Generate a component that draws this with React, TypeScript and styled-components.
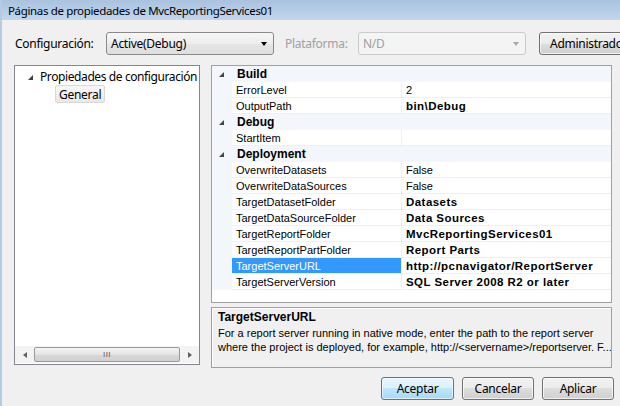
import React from "react";
import styled, { createGlobalStyle } from "styled-components";

const Global = createGlobalStyle`
  html, body { margin: 0; padding: 0; background: #f0f0f0; }
  #root { width: 620px; height: 406px; }
`;

const UI = `"Noto Sans", "Open Sans", sans-serif`;
const GRIDFONT = `"Liberation Sans", Arial, sans-serif`;

const Win = styled.div`
  width: 620px;
  height: 406px;
  overflow: hidden;
  display: flex;
  flex-direction: column;
  background: #f0f0f0;
  border-left: 2px solid #b4cbe4;
  box-sizing: border-box;
  font-family: ${UI};
  font-size: 12px;
  letter-spacing: -0.28px;
  color: #000;
`;

const TitleBar = styled.div`
  height: 20px;
  flex: none;
  display: flex;
  align-items: center;
  padding-left: 6px;
  background: linear-gradient(#a9c2de, #c2d7ed);
  font-size: 11.5px;
  letter-spacing: -0.35px;
  color: #000;
  white-space: nowrap;
`;

const Body = styled.div`
  flex: 1;
  display: flex;
  flex-direction: column;
  padding: 12px 0 0 12px;
`;

const ConfigRow = styled.div`
  display: flex;
  align-items: center;
  height: 23px;
  white-space: nowrap;
`;

const Label = styled.span<{ $w: number; $disabled?: boolean }>`
  width: ${(p) => p.$w}px;
  flex: none;
  padding-left: 1px;
  color: ${(p) => (p.$disabled ? "#a0a0a0" : "#000")};
`;

const Combo = styled.div<{ $disabled?: boolean }>`
  width: 168px;
  height: 23px;
  flex: none;
  box-sizing: border-box;
  display: flex;
  align-items: center;
  justify-content: space-between;
  padding: 0 6px 0 4px;
  border-radius: 3px;
  border: 1px solid ${(p) => (p.$disabled ? "#c9cccf" : "#8a8a8a")};
  background: ${(p) =>
    p.$disabled ? "#f4f4f4" : "linear-gradient(#f6f6f6, #eeeeee 50%, #e6e6e6 50%, #dedede)"};
  color: ${(p) => (p.$disabled ? "#a0a0a0" : "#000")};
`;

const Arrow = styled.span<{ $disabled?: boolean }>`
  width: 0;
  height: 0;
  border-left: 3.5px solid transparent;
  border-right: 3.5px solid transparent;
  border-top: 4px solid ${(p) => (p.$disabled ? "#a9a9a9" : "#000")};
`;

const Button = styled.div<{ $default?: boolean; $w: number }>`
  width: ${(p) => p.$w}px;
  height: 23px;
  flex: none;
  box-sizing: border-box;
  display: flex;
  align-items: center;
  justify-content: center;
  border-radius: 3px;
  border: 1px solid ${(p) => (p.$default ? "#3c7fb1" : "#707070")};
  background: ${(p) =>
    p.$default
      ? "linear-gradient(#eaf6fd, #d9f0fc 50%, #bee6fd 50%, #a7d9f5)"
      : "linear-gradient(#f2f2f2, #ebebeb 50%, #dddddd 50%, #cfcfcf)"};
  box-shadow: inset 0 0 0 1px ${(p) => (p.$default ? "rgba(255,255,255,0.6)" : "rgba(255,255,255,0.7)")};
  white-space: nowrap;
`;

const AdminButton = styled(Button)`
  justify-content: flex-start;
  padding-left: 10px;
`;

const Main = styled.div`
  display: flex;
  gap: 11px;
  margin-top: 10px;
`;

const TreePanel = styled.div`
  width: 186px;
  height: 300px;
  box-sizing: border-box;
  border: 1px solid #828790;
  background: #fff;
  display: flex;
  flex-direction: column;
`;

const TreeBody = styled.div`
  flex: 1;
  display: flex;
  flex-direction: column;
  padding-top: 1px;
`;

const TreeRow = styled.div<{ $indent: number }>`
  display: flex;
  align-items: center;
  height: 18px;
  padding-left: ${(p) => p.$indent}px;
  white-space: nowrap;
  letter-spacing: -0.4px;
`;

const Expander = styled.span`
  width: 0;
  height: 0;
  flex: none;
  border-left: 5px solid transparent;
  border-bottom: 5px solid #404040;
  margin-right: 7px;
  margin-top: 2px;
`;

const SelectedItem = styled.span`
  display: inline-flex;
  align-items: center;
  height: 16px;
  padding: 0 3px 0 3px;
  border: 1px solid #d9d9d9;
  border-radius: 2px;
  background: linear-gradient(#f7f7f7, #e8e8e8);
  letter-spacing: -0.28px;
`;

const HScroll = styled.div`
  height: 17px;
  flex: none;
  display: flex;
  align-items: center;
  background: #f3f3f3;
  margin-bottom: 1px;
`;

const ScrollBtn = styled.div`
  width: 19px;
  height: 17px;
  flex: none;
  display: flex;
  align-items: center;
  justify-content: center;
`;

const TriLeft = styled.span`
  width: 0;
  height: 0;
  border-top: 3.5px solid transparent;
  border-bottom: 3.5px solid transparent;
  border-right: 4px solid #606060;
`;

const TriRight = styled.span`
  width: 0;
  height: 0;
  border-top: 3.5px solid transparent;
  border-bottom: 3.5px solid transparent;
  border-left: 4px solid #606060;
`;

const Thumb = styled.div`
  flex: 1;
  height: 15px;
  box-sizing: border-box;
  border: 1px solid #9a9a9a;
  border-radius: 2px;
  background: linear-gradient(#f4f4f4, #e4e4e4 50%, #d8d8d8 50%, #d0d0d0);
  display: flex;
  align-items: center;
  justify-content: center;
  font-family: ${GRIDFONT};
  font-size: 8px;
  letter-spacing: 0.5px;
  color: #555;
`;

const RightCol = styled.div`
  width: 401px;
  display: flex;
  flex-direction: column;
  gap: 4px;
`;

const Grid = styled.div`
  height: 238px;
  box-sizing: border-box;
  border: 1px solid #a0a0a0;
  background: #fff;
  font-family: ${GRIDFONT};
  font-size: 11px;
  letter-spacing: 0;
  display: flex;
  flex-direction: column;
`;

const CatRow = styled.div`
  height: 16px;
  flex: none;
  display: flex;
  align-items: center;
  background: #f3f6fb;
  font-weight: bold;
  font-size: 12px;
  white-space: nowrap;
`;

const CatExpander = styled.span`
  width: 0;
  height: 0;
  border-left: 5px solid transparent;
  border-bottom: 5px solid #444;
  margin: 1px 13px 0 7px;
`;

const PropRow = styled.div`
  height: 16px;
  flex: none;
  display: grid;
  grid-template-columns: 20px 170px 1fr;
  white-space: nowrap;
`;

const Gutter = styled.div`
  background: #f3f6fb;
`;

const NameCell = styled.div<{ $selected?: boolean }>`
  display: flex;
  align-items: center;
  padding-left: 4px;
  box-sizing: border-box;
  border-bottom: 1px solid #eef0f4;
  border-right: 1px solid #eef0f4;
  background: ${(p) => (p.$selected ? "#3399ff" : "#fff")};
  color: ${(p) => (p.$selected ? "#fff" : "#000")};
`;

const ValueCell = styled.div<{ $bold?: boolean }>`
  display: flex;
  align-items: center;
  padding-left: 4px;
  box-sizing: border-box;
  border-bottom: 1px solid #eef0f4;
  font-weight: ${(p) => (p.$bold ? "bold" : "normal")};
  letter-spacing: ${(p) => (p.$bold ? "0.45px" : "0")};
  font-size: ${(p) => (p.$bold ? "11.5px" : "11px")};
  overflow: hidden;
`;

const Desc = styled.div`
  height: 61px;
  box-sizing: border-box;
  border: 1px solid #a0a0a0;
  box-shadow: inset 1px 1px 0 #fff;
  background: #f0f0f0;
  padding: 2px 0 0 6px;
  font-family: ${GRIDFONT};
  font-size: 11px;
  letter-spacing: 0;
  line-height: 14px;
  white-space: nowrap;
  overflow: hidden;
`;

const DescTitle = styled.div`
  font-weight: bold;
  font-size: 12px;
  line-height: 15px;
  margin-bottom: 1px;
`;

const ButtonRow = styled.div`
  display: flex;
  justify-content: flex-end;
  gap: 8px;
  margin-top: 9px;
  padding-right: 6px;
`;

type Prop = { name: string; value: string; bold?: boolean; selected?: boolean };
type Cat = { name: string; props: Prop[] };

const data: Cat[] = [
  {
    name: "Build",
    props: [
      { name: "ErrorLevel", value: "2" },
      { name: "OutputPath", value: "bin\\Debug", bold: true },
    ],
  },
  { name: "Debug", props: [{ name: "StartItem", value: "" }] },
  {
    name: "Deployment",
    props: [
      { name: "OverwriteDatasets", value: "False" },
      { name: "OverwriteDataSources", value: "False" },
      { name: "TargetDatasetFolder", value: "Datasets", bold: true },
      { name: "TargetDataSourceFolder", value: "Data Sources", bold: true },
      { name: "TargetReportFolder", value: "MvcReportingServices01", bold: true },
      { name: "TargetReportPartFolder", value: "Report Parts", bold: true },
      { name: "TargetServerURL", value: "http://pcnavigator/ReportServer", bold: true, selected: true },
      { name: "TargetServerVersion", value: "SQL Server 2008 R2 or later", bold: true },
    ],
  },
];

export default function App() {
  return (
    <>
      <Global />
      <Win>
        <TitleBar>Páginas de propiedades de MvcReportingServices01</TitleBar>
        <Body>
          <ConfigRow>
            <Label $w={91}>Configuración:</Label>
            <Combo>
              <span>Active(Debug)</span>
              <Arrow />
            </Combo>
            <Label $w={73} $disabled style={{ marginLeft: 10 }}>
              Plataforma:
            </Label>
            <Combo $disabled>
              <span>N/D</span>
              <Arrow $disabled />
            </Combo>
            <AdminButton $w={100} style={{ marginLeft: 13 }}>
              Administrador de configuración...
            </AdminButton>
          </ConfigRow>
          <Main>
            <TreePanel>
              <TreeBody>
                <TreeRow $indent={13}>
                  <Expander />
                  Propiedades de configuración
                </TreeRow>
                <TreeRow $indent={40}>
                  <SelectedItem>General</SelectedItem>
                </TreeRow>
              </TreeBody>
              <HScroll>
                <ScrollBtn>
                  <TriLeft />
                </ScrollBtn>
                <Thumb>III</Thumb>
                <ScrollBtn>
                  <TriRight />
                </ScrollBtn>
              </HScroll>
            </TreePanel>
            <RightCol>
              <Grid>
                {data.map((c) => (
                  <React.Fragment key={c.name}>
                    <CatRow>
                      <CatExpander />
                      {c.name}
                    </CatRow>
                    {c.props.map((p) => (
                      <PropRow key={p.name}>
                        <Gutter />
                        <NameCell $selected={p.selected}>{p.name}</NameCell>
                        <ValueCell $bold={p.bold}>{p.value}</ValueCell>
                      </PropRow>
                    ))}
                  </React.Fragment>
                ))}
              </Grid>
              <Desc>
                <DescTitle>TargetServerURL</DescTitle>
                <div>For a report server running in native mode, enter the path to the report server</div>
                <div>where the project is deployed, for example, http://&lt;servername&gt;/reportserver. F...</div>
              </Desc>
            </RightCol>
          </Main>
          <ButtonRow>
            <Button $w={73} $default>
              Aceptar
            </Button>
            <Button $w={72}>Cancelar</Button>
            <Button $w={72}>Aplicar</Button>
          </ButtonRow>
        </Body>
      </Win>
    </>
  );
}
